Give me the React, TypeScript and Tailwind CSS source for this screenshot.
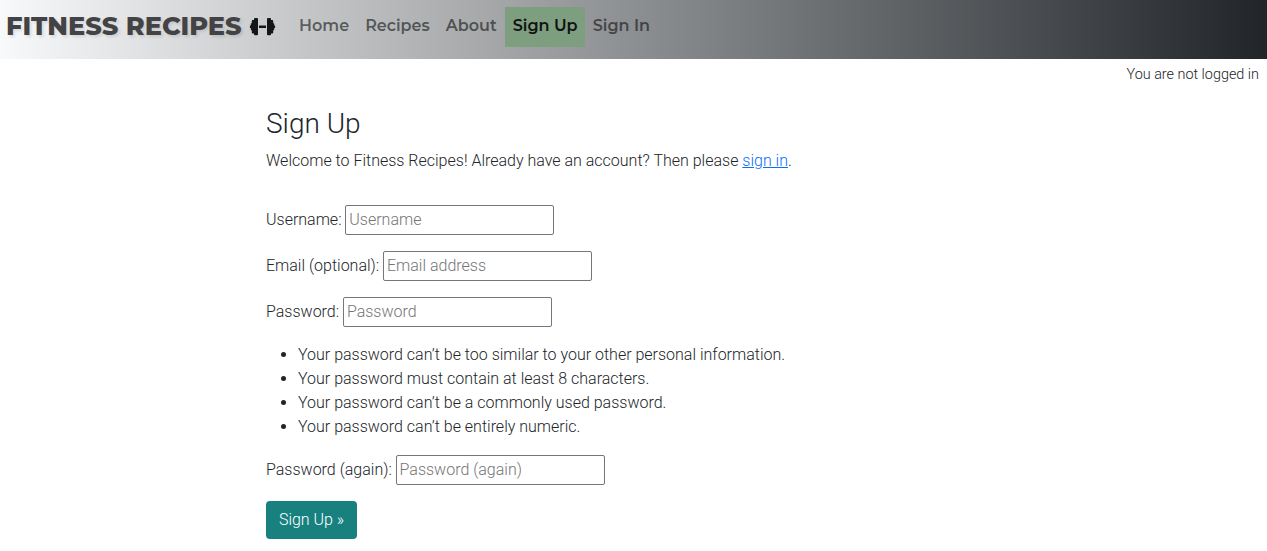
const navItems = ["Home", "Recipes", "About", "Sign Up", "Sign In"];

const passwordRules = [
  "Your password can’t be too similar to your other personal information.",
  "Your password must contain at least 8 characters.",
  "Your password can’t be a commonly used password.",
  "Your password can’t be entirely numeric.",
];

function Dumbbell() {
  return (
    <svg className="ml-[7px] mt-[11px] h-[18px] w-[27px] shrink-0" viewBox="0 0 27 18" fill="#151617">
      <path d="M8 0Q9 0 9 1V16.3Q9 17.3 8 17.3H6Q5 17.3 5 16.3V15.4H3.8Q2.8 15.4 2.8 14.4V12.2H2.4Q1.8 12.2 1.8 11.6V10H0.9V7.4H1.8V5.8Q1.8 5.2 2.4 5.2H2.8V3Q2.8 2 3.8 2H5V1Q5 0 6 0Z" />
      <path d="M19 0Q18 0 18 1V16.3Q18 17.3 19 17.3H21Q22 17.3 22 16.3V15.4H23.2Q24.2 15.4 24.2 14.4V12.2H24.6Q25.2 12.2 25.2 11.6V10H26.1V7.4H25.2V5.8Q25.2 5.2 24.6 5.2H24.2V3Q24.2 2 23.2 2H22V1Q22 0 21 0Z" />
      <rect x="10" y="7.4" width="7" height="2.6" rx="0.3" />
    </svg>
  );
}

function Field({ label, placeholder, type = "text" }: { label: string; placeholder: string; type?: string }) {
  return (
    <div className="mb-4 flex h-[30px] items-center">
      <label className="mr-[3.8px] whitespace-pre">{label}</label>
      <input
        type={type}
        placeholder={placeholder}
        className="h-[30px] w-[209px] rounded-[2px] border border-[#767676] bg-white px-[3px] pb-[2px] pt-0 leading-6 placeholder:text-[#757575]"
      />
    </div>
  );
}

export default function App() {
  return (
    <div className="min-h-[551px] bg-white font-['Roboto',sans-serif] text-base font-light text-[#212529]">
      <header className="flex h-[59px] items-start bg-[linear-gradient(to_right,#f8f9fa,#212529)] pl-[6px] pt-[7px] font-['Montserrat',sans-serif]">
        <a href="#" className="flex items-start text-[25.6px] font-extrabold leading-[37px] text-[#434345] [text-shadow:2px_2px_3px_rgba(0,0,0,0.1)]">
          FITNESS RECIPES
          <Dumbbell />
        </a>
        <nav className="ml-[15.4px] flex">
          {navItems.map((item) => (
            <a
              key={item}
              href="#"
              className={
                item === "Sign Up"
                  ? "h-10 w-20 whitespace-nowrap bg-[#7e9e80] px-2 pt-[7px] font-semibold text-[#111312]"
                  : "h-10 px-2 pt-[7px] font-semibold text-black/55"
              }
            >
              {item}
            </a>
          ))}
        </nav>
      </header>
      <p className="h-[48px] pr-2 pt-[5px] text-right text-[14.4px] leading-[22px]">You are not logged in</p>
      <main className="ml-[266px]">
        <h1 className="mb-2 text-[28px] leading-[34px]">Sign Up</h1>
        <p className="mb-8">
          Welcome to Fitness Recipes! Already have an account? Then please{" "}
          <a href="#" className="text-[#0d6efd] underline">sign in</a>.
        </p>
        <form>
          <Field label="Username:" placeholder="Username" />
          <Field label="Email (optional):" placeholder="Email address" />
          <Field label="Password:" placeholder="Password" type="password" />
          <ul className="mb-4 list-disc pl-8">
            {passwordRules.map((rule) => (
              <li key={rule}>{rule}</li>
            ))}
          </ul>
          <Field label="Password (again):" placeholder="Password (again)" type="password" />
          <button type="button" className="h-[38px] w-[91px] rounded bg-[#18817f] text-white">
            Sign Up »
          </button>
        </form>
      </main>
    </div>
  );
}
